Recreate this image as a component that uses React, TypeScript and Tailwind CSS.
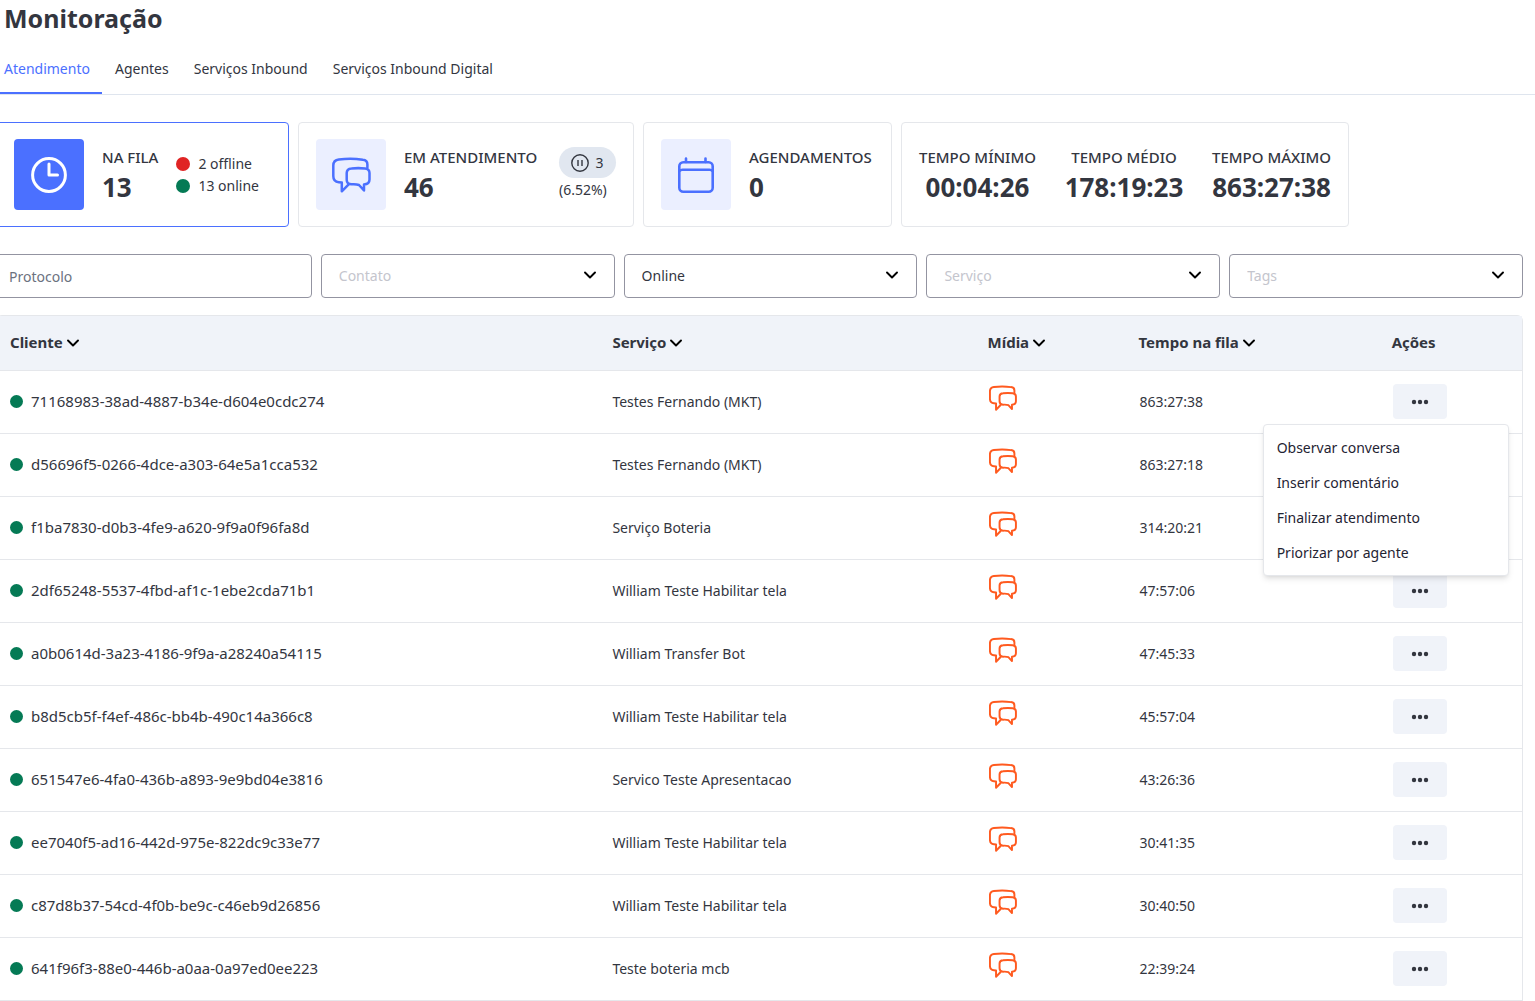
import React from "react";
import { ChevronDown } from "lucide-react";

type QueueItem = {
  id: string;
  service: string;
  time: string;
};

const tabs = ["Atendimento", "Agentes", "Serviços Inbound", "Serviços Inbound Digital"];

const times = [
  { label: "TEMPO MÍNIMO", value: "00:04:26" },
  { label: "TEMPO MÉDIO", value: "178:19:23" },
  { label: "TEMPO MÁXIMO", value: "863:27:38" },
];

const filters = [
  { name: "Contato", options: ["Contato"], placeholder: true },
  { name: "Status", options: ["Online", "Offline"], placeholder: false },
  { name: "Serviço", options: ["Serviço"], placeholder: true },
  { name: "Tags", options: ["Tags"], placeholder: true },
];

const columns = [
  { label: "Cliente", width: "w-[39.5%]", sortable: true },
  { label: "Serviço", width: "w-[24.6%]", sortable: true },
  { label: "Mídia", width: "w-[9.9%]", sortable: true },
  { label: "Tempo na fila", width: "w-[16.6%]", sortable: true },
  { label: "Ações", width: "w-[9.4%]", sortable: false },
];

const queue: QueueItem[] = [
  { id: "71168983-38ad-4887-b34e-d604e0cdc274", service: "Testes Fernando (MKT)", time: "863:27:38" },
  { id: "d56696f5-0266-4dce-a303-64e5a1cca532", service: "Testes Fernando (MKT)", time: "863:27:18" },
  { id: "f1ba7830-d0b3-4fe9-a620-9f9a0f96fa8d", service: "Serviço Boteria", time: "314:20:21" },
  { id: "2df65248-5537-4fbd-af1c-1ebe2cda71b1", service: "William Teste Habilitar tela", time: "47:57:06" },
  { id: "a0b0614d-3a23-4186-9f9a-a28240a54115", service: "William Transfer Bot", time: "47:45:33" },
  { id: "b8d5cb5f-f4ef-486c-bb4b-490c14a366c8", service: "William Teste Habilitar tela", time: "45:57:04" },
  { id: "651547e6-4fa0-436b-a893-9e9bd04e3816", service: "Servico Teste Apresentacao", time: "43:26:36" },
  { id: "ee7040f5-ad16-442d-975e-822dc9c33e77", service: "William Teste Habilitar tela", time: "30:41:35" },
  { id: "c87d8b37-54cd-4f0b-be9c-c46eb9d26856", service: "William Teste Habilitar tela", time: "30:40:50" },
  { id: "641f96f3-88e0-446b-a0aa-0a97ed0ee223", service: "Teste boteria mcb", time: "22:39:24" },
];

const menuItems = [
  "Observar conversa",
  "Inserir comentário",
  "Finalizar atendimento",
  "Priorizar por agente",
];

const ChatIcon = ({ className }: { className: string }) => (
  <svg
    viewBox="0 0 39 36"
    className={className}
    fill="none"
    stroke="currentColor"
    strokeLinecap="round"
    strokeLinejoin="round"
    aria-hidden="true"
  >
    <path d="M35.4 10.5V7.5c0-3-1.6-4.4-4.6-4.7-8-1.2-16-1.2-24-.2C3 3 1.4 4.8 1.3 8.5v10.5c0 4 1.900 6 5.500 6.300l3 .3v8.700l6.400-6.500" />
    <path d="M19.500 11.500c4.500-.5 9-.5 13.500 0 3 .3 4.500 1.800 4.500 4.500v6.500c0 3-1.600 4.700-5.500 4.900v6l-5-5.400c-2.500-.9-5-.9-7.500-.7-3.400-.1-4.800-1.700-4.800-4.600V16c0-2.800 1.800-4.300 4.800-4.500z" />
  </svg>
);

const ClockIcon = () => (
  <svg
    viewBox="0 0 36 36"
    className="size-9"
    fill="none"
    stroke="currentColor"
    strokeWidth="3"
    strokeLinecap="round"
    strokeLinejoin="round"
    aria-hidden="true"
  >
    <circle cx="18" cy="18" r="16.4" />
    <path d="M18 7v11h8.500" />
  </svg>
);

const CalendarIcon = () => (
  <svg
    viewBox="0 0 36 36"
    className="size-9"
    fill="none"
    stroke="currentColor"
    strokeWidth="2.6"
    strokeLinecap="round"
    aria-hidden="true"
  >
    <rect x="1.300" y="5.200" width="33.400" height="29.500" rx="4" />
    <path d="M8 1.500v3.500M27.500 1.500v3.500M1.300 14c1-1 2-1.200 3.200-1.200h27c1.200 0 2.200.2 3.200 1.200" />
  </svg>
);

const PauseIcon = () => (
  <svg
    viewBox="0 0 18 18"
    className="size-[18px]"
    fill="none"
    stroke="currentColor"
    strokeWidth="1.4"
    aria-hidden="true"
  >
    <circle cx="9" cy="9" r="8.200" />
    <path d="M7 6v6M11 6v6" />
  </svg>
);

const DotsIcon = () => (
  <svg viewBox="0 0 18 6" className="h-1.5 w-[18px]" fill="currentColor" aria-hidden="true">
    <circle cx="3" cy="3" r="2.200" />
    <circle cx="9" cy="3" r="2.200" />
    <circle cx="15" cy="3" r="2.200" />
  </svg>
);

const Metric = ({ label, value }: { label: string; value: string }) => (
  <div>
    <p className="text-[15px] leading-6 font-medium">{label}</p>
    <p className="text-[26px] leading-9 font-bold">{value}</p>
  </div>
);

const RowActions = ({ open }: { open: boolean }) => (
  <div className="relative h-[35px] w-[54px]">
    <button
      type="button"
      aria-label="Ações"
      aria-expanded={open}
      className="flex h-full w-full items-center justify-center rounded bg-[#f0f3f9]"
    >
      <DotsIcon />
    </button>
    {open && (
      <div
        role="menu"
        className="absolute top-10 -right-[62px] z-10 w-[246px] rounded border border-[#e5e7eb] bg-white py-[5px] text-[#1f2433] shadow-md"
      >
        {menuItems.map((item) => (
          <button
            key={item}
            type="button"
            role="menuitem"
            className="block h-[35px] w-full px-[13px] text-left"
          >
            {item}
          </button>
        ))}
      </div>
    )}
  </div>
);

const App = () => {
  return (
    <main className="overflow-x-hidden bg-white font-['Noto_Sans',sans-serif] text-sm text-[#33363f]">
      <h1 className="px-1 pb-3 text-[25px] leading-9 font-bold">Monitoração</h1>

      <nav className="flex border-b border-[#dfe5ee]">
        {tabs.map((tab, index) => (
          <a
            key={tab}
            href="#"
            className={
              index === 0
                ? "h-[46px] border-b-2 border-[#4b70ff] pt-[11px] pr-3 pl-1 text-[#4b70ff]"
                : "h-[46px] pt-[11px] pr-3 pl-[13px]"
            }
          >
            {tab}
          </a>
        ))}
      </nav>

      <div className="mt-[27px] mr-3 -ml-1">
        <section className="flex gap-[9px]">
          <div className="flex h-[105px] w-[293px] items-center gap-[18px] rounded border border-[#4b70ff] px-[17px]">
            <div className="flex h-[71px] w-[70px] items-center justify-center rounded bg-[#4b70ff] text-white">
              <ClockIcon />
            </div>
            <Metric label="NA FILA" value="13" />
            <ul className="leading-[22px]">
              <li className="flex items-center gap-2">
                <span className="size-3.5 rounded-full bg-[#e02424]" />2 offline
              </li>
              <li className="flex items-center gap-2">
                <span className="size-3.5 rounded-full bg-[#057a55]" />
                13 online
              </li>
            </ul>
          </div>

          <div className="flex h-[105px] w-[336px] items-center gap-[18px] rounded border border-[#e5e7eb] px-[17px]">
            <div className="flex h-[71px] w-[70px] items-center justify-center rounded bg-[#ebefff] text-[#4b70ff]">
              <ChatIcon className="h-9 w-[39px] stroke-[2.5]" />
            </div>
            <Metric label="EM ATENDIMENTO" value="46" />
            <div className="ml-auto">
              <p className="flex h-[31px] w-[57px] items-center justify-center gap-1.5 rounded-full bg-[#e1e7f0]">
                <PauseIcon />3
              </p>
              <p className="leading-6">(6.52%)</p>
            </div>
          </div>

          <div className="flex h-[105px] w-[249px] items-center gap-[18px] rounded border border-[#e5e7eb] px-[17px]">
            <div className="flex h-[71px] w-[70px] items-center justify-center rounded bg-[#ebefff] text-[#4b70ff]">
              <CalendarIcon />
            </div>
            <Metric label="AGENDAMENTOS" value="0" />
          </div>

          <div className="flex h-[105px] w-[448px] items-center justify-between rounded border border-[#e5e7eb] px-[17px] text-center">
            {times.map((time) => (
              <Metric key={time.label} label={time.label} value={time.value} />
            ))}
          </div>
        </section>

        <form className="mt-[27px] grid grid-cols-[316fr_repeat(4,294fr)] gap-[9px]">
          <input
            type="text"
            aria-label="Protocolo"
            placeholder="Protocolo"
            className="h-11 min-w-0 rounded border border-[#9394a1] px-3 placeholder:text-[#6b7280]"
          />
          {filters.map((filter) => (
            <div key={filter.name} className="relative">
              <select
                aria-label={filter.name}
                className={
                  filter.placeholder
                    ? "h-11 w-full appearance-none rounded border border-[#9394a1] bg-white px-[17px] text-[#c4c5cd]"
                    : "h-11 w-full appearance-none rounded border border-[#9394a1] bg-white px-[17px]"
                }
              >
                {filter.options.map((option) => (
                  <option key={option}>{option}</option>
                ))}
              </select>
              <ChevronDown
                className="pointer-events-none absolute top-[11px] right-[15px] size-5 text-black"
                strokeWidth={2.3}
              />
            </div>
          ))}
        </form>

        <div className="mt-[17px] rounded-t-md border border-[#e5e7eb]">
          <table className="w-full table-fixed text-left">
            <thead>
              <tr className="h-[54px] border-b border-[#e5e7eb] bg-[#f0f3f9] text-[15px]">
                {columns.map((column) => (
                  <th key={column.label} className={`px-[13px] font-bold ${column.width}`}>
                    <span className="flex items-center">
                      {column.label}
                      {column.sortable && (
                        <ChevronDown className="size-5 text-black" strokeWidth={2.3} />
                      )}
                    </span>
                  </th>
                ))}
              </tr>
            </thead>
            <tbody>
              {queue.map((item, index) => (
                <tr key={item.id} className="h-[63px] border-b border-[#e5e7eb]">
                  <td className="px-[13px] text-[15px]">
                    <span className="flex items-center gap-2">
                      <span className="size-[13px] rounded-full bg-[#057a55]" />
                      {item.id}
                    </span>
                  </td>
                  <td className="px-[13px]">{item.service}</td>
                  <td className="px-3.5 pb-2 text-[#ff5a1f]">
                    <ChatIcon className="h-[26px] w-7 stroke-[2.7]" />
                  </td>
                  <td className="px-3.5">{item.time}</td>
                  <td className="px-3.5">
                    <RowActions open={index === 0} />
                  </td>
                </tr>
              ))}
            </tbody>
          </table>
        </div>
      </div>
    </main>
  );
};

export default App;
